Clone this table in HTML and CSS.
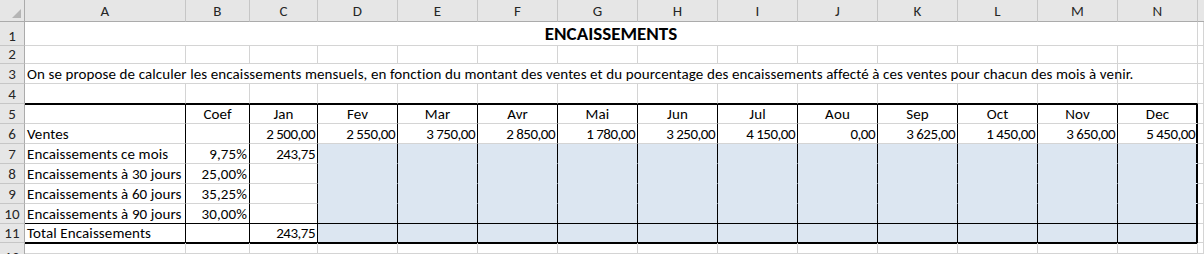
FILE: index.html
```html
<!DOCTYPE html>
<html lang="fr">
<head>
<meta charset="utf-8">
<title>Encaissements</title>
<link rel="stylesheet" href="styles.css">
</head>
<body>
<div class="sheet">
  <!-- column headers -->
  <div class="corner"><span class="tri"></span></div>
  <div class="ch">A</div><div class="ch">B</div><div class="ch">C</div><div class="ch">D</div><div class="ch">E</div><div class="ch">F</div><div class="ch">G</div><div class="ch">H</div><div class="ch">I</div><div class="ch">J</div><div class="ch">K</div><div class="ch">L</div><div class="ch">M</div><div class="ch">N</div><div class="ch last"></div>

  <!-- row 1 -->
  <div class="rh">1</div>
  <div class="c title span-an">ENCAISSEMENTS</div>
  <div class="c"></div>

  <!-- row 2 -->
  <div class="rh">2</div>
  <div class="c"></div><div class="c"></div><div class="c"></div><div class="c"></div><div class="c"></div><div class="c"></div><div class="c"></div><div class="c"></div><div class="c"></div><div class="c"></div><div class="c"></div><div class="c"></div><div class="c"></div><div class="c"></div><div class="c"></div>

  <!-- row 3 -->
  <div class="rh">3</div>
  <div class="c span-am">On se propose de calculer les encaissements mensuels, en fonction du montant des ventes et du pourcentage des encaissements affecté à ces ventes pour chacun des mois à venir.</div>
  <div class="c"></div><div class="c"></div>

  <!-- row 4 -->
  <div class="rh">4</div>
  <div class="c ab"></div><div class="c ab"></div><div class="c ab"></div><div class="c ab"></div><div class="c ab"></div><div class="c ab"></div><div class="c ab"></div><div class="c ab"></div><div class="c ab"></div><div class="c ab"></div><div class="c ab"></div><div class="c ab"></div><div class="c ab"></div><div class="c ab"></div><div class="c"></div>

  <!-- row 5 -->
  <div class="rh">5</div>
  <div class="c t top va"></div>
  <div class="c t top vb ctr">Coef</div>
  <div class="c t top vb ctr">Jan</div>
  <div class="c t top vb ctr">Fev</div>
  <div class="c t top vb ctr">Mar</div>
  <div class="c t top vb ctr">Avr</div>
  <div class="c t top vb ctr">Mai</div>
  <div class="c t top vb ctr">Jun</div>
  <div class="c t top vb ctr">Jul</div>
  <div class="c t top vb ctr">Aou</div>
  <div class="c t top vb ctr">Sep</div>
  <div class="c t top vb ctr">Oct</div>
  <div class="c t top vb ctr">Nov</div>
  <div class="c t top vb ctr rt">Dec</div>
  <div class="c"></div>

  <!-- row 6 -->
  <div class="rh">6</div>
  <div class="c t va">Ventes</div>
  <div class="c t vb"></div>
  <div class="c t vb num amt">2&nbsp;500,00</div>
  <div class="c t vb num amt">2&nbsp;550,00</div>
  <div class="c t vb num amt">3&nbsp;750,00</div>
  <div class="c t vb num amt">2&nbsp;850,00</div>
  <div class="c t vb num amt">1&nbsp;780,00</div>
  <div class="c t vb num amt">3&nbsp;250,00</div>
  <div class="c t vb num amt">4&nbsp;150,00</div>
  <div class="c t vb num amt">0,00</div>
  <div class="c t vb num amt">3&nbsp;625,00</div>
  <div class="c t vb num amt">1&nbsp;450,00</div>
  <div class="c t vb num amt">3&nbsp;650,00</div>
  <div class="c t vb num amt rt">5&nbsp;450,00</div>
  <div class="c"></div>

  <!-- row 7 -->
  <div class="rh">7</div>
  <div class="c t va">Encaissements ce mois</div>
  <div class="c t vb num">9,75%</div>
  <div class="c t vb num amt">243,75</div>
  <div class="c t vb fill"></div><div class="c t vb fill"></div><div class="c t vb fill"></div><div class="c t vb fill"></div><div class="c t vb fill"></div><div class="c t vb fill"></div><div class="c t vb fill"></div><div class="c t vb fill"></div><div class="c t vb fill"></div><div class="c t vb fill"></div><div class="c t vb fill rt"></div>
  <div class="c"></div>

  <!-- row 8 -->
  <div class="rh">8</div>
  <div class="c t va">Encaissements à 30 jours</div>
  <div class="c t vb num">25,00%</div>
  <div class="c t vb"></div>
  <div class="c t vb fill"></div><div class="c t vb fill"></div><div class="c t vb fill"></div><div class="c t vb fill"></div><div class="c t vb fill"></div><div class="c t vb fill"></div><div class="c t vb fill"></div><div class="c t vb fill"></div><div class="c t vb fill"></div><div class="c t vb fill"></div><div class="c t vb fill rt"></div>
  <div class="c"></div>

  <!-- row 9 -->
  <div class="rh">9</div>
  <div class="c t va">Encaissements à 60 jours</div>
  <div class="c t vb num">35,25%</div>
  <div class="c t vb"></div>
  <div class="c t vb fill"></div><div class="c t vb fill"></div><div class="c t vb fill"></div><div class="c t vb fill"></div><div class="c t vb fill"></div><div class="c t vb fill"></div><div class="c t vb fill"></div><div class="c t vb fill"></div><div class="c t vb fill"></div><div class="c t vb fill"></div><div class="c t vb fill rt"></div>
  <div class="c"></div>

  <!-- row 10 -->
  <div class="rh">10</div>
  <div class="c t va sep">Encaissements à 90 jours</div>
  <div class="c t vb num sep">30,00%</div>
  <div class="c t vb sep"></div>
  <div class="c t vb fill sep"></div><div class="c t vb fill sep"></div><div class="c t vb fill sep"></div><div class="c t vb fill sep"></div><div class="c t vb fill sep"></div><div class="c t vb fill sep"></div><div class="c t vb fill sep"></div><div class="c t vb fill sep"></div><div class="c t vb fill sep"></div><div class="c t vb fill sep"></div><div class="c t vb fill sep rt"></div>
  <div class="c"></div>

  <!-- row 11 -->
  <div class="rh">11</div>
  <div class="c t va bot">Total Encaissements</div>
  <div class="c t vb bot"></div>
  <div class="c t vb num amt bot">243,75</div>
  <div class="c t vb fill bot"></div><div class="c t vb fill bot"></div><div class="c t vb fill bot"></div><div class="c t vb fill bot"></div><div class="c t vb fill bot"></div><div class="c t vb fill bot"></div><div class="c t vb fill bot"></div><div class="c t vb fill bot"></div><div class="c t vb fill bot"></div><div class="c t vb fill bot"></div><div class="c t vb fill bot rt"></div>
  <div class="c"></div>

  <!-- row 12 -->
  <div class="rh rh12">12</div>
  <div class="c r12"></div><div class="c r12"></div><div class="c r12"></div><div class="c r12"></div><div class="c r12"></div><div class="c r12"></div><div class="c r12"></div><div class="c r12"></div><div class="c r12"></div><div class="c r12"></div><div class="c r12"></div><div class="c r12"></div><div class="c r12"></div><div class="c r12"></div><div class="c"></div>
</div>
</body>
</html>
```

FILE: styles.css
```css
html, body {
  margin: 0;
  padding: 0;
  background: #ffffff;
}

.sheet {
  width: 1204px;
  height: 254px;
  overflow: hidden;
  display: grid;
  grid-template-columns: 25px 161px 64px 68px 80px repeat(10, 80px) 1fr;
  grid-template-rows: 22px 24px 18px 20px 20px 20px 20px 20px 20px 20px 20px 1fr;
  font-family: Carlito, Calibri, "Liberation Sans", sans-serif;
  font-size: 15px;
  letter-spacing: 0.1px;
  color: #000000;
}

.corner {
  position: relative;
  background: #e6e6e6;
  border-right: 1px solid #ababab;
  border-bottom: 1px solid #ababab;
  box-sizing: border-box;
}

.tri {
  position: absolute;
  right: 3px;
  bottom: 3px;
  width: 0;
  height: 0;
  border-left: 9px solid transparent;
  border-bottom: 9px solid #b5b5b5;
}

.ch {
  background: #e6e6e6;
  border-right: 1px solid #c6c6c6;
  border-bottom: 1px solid #ababab;
  box-sizing: border-box;
  color: #262626;
  display: flex;
  align-items: center;
  justify-content: center;
  padding-top: 1px;
}

.ch.last {
  border-right: none;
}

.rh {
  background: #e6e6e6;
  border-right: 1px solid #ababab;
  border-bottom: 1px solid #c6c6c6;
  box-sizing: border-box;
  color: #262626;
  display: flex;
  align-items: flex-end;
  justify-content: center;
  line-height: 18px;
  overflow: hidden;
}

.rh12 {
  align-items: flex-start;
  padding-top: 5px;
  border-bottom: none;
}

.c {
  box-sizing: border-box;
  border-right: 1px solid #d4d4d4;
  border-bottom: 1px solid #d4d4d4;
  padding: 0 2px 0 2px;
  white-space: nowrap;
  display: flex;
  align-items: flex-end;
  line-height: 18px;
  min-width: 0;
}

.span-an {
  grid-column: 2 / 16;
}

.span-am {
  grid-column: 2 / 15;
}

.title {
  justify-content: center;
  font-weight: bold;
  font-size: 19px;
  letter-spacing: 0;
  line-height: 23px;
}

/* row 4: bottom part of thick top border */
.ab {
  border-bottom-color: #000000;
}

/* table cells */
.t.top {
  box-shadow: inset 0 1px 0 #000000;
}

.t.va,
.t.vb {
  border-right-color: #000000;
}

.ctr {
  justify-content: center;
}

.num {
  justify-content: flex-end;
}

.amt {
  letter-spacing: -0.5px;
  padding-right: 2px;
}

.fill {
  background: #dce6f1;
  border-bottom-color: #dce6f1;
}

.sep,
.bot {
  border-bottom-color: #000000;
}

.rt {
  box-shadow: inset -1px 0 0 #000000;
}

.t.top.rt {
  box-shadow: inset 0 1px 0 #000000, inset -1px 0 0 #000000;
}

.r12 {
  box-shadow: inset 0 1px 0 #000000;
}
```
